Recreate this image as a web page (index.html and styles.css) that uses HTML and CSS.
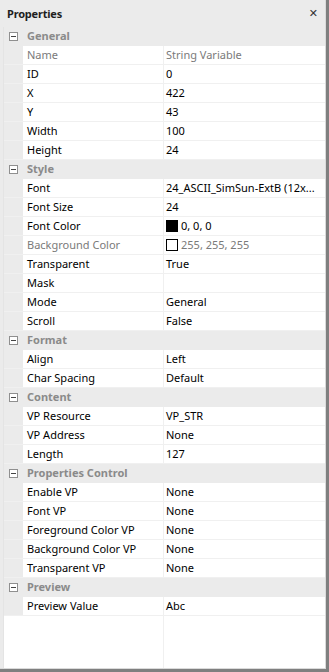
FILE: index.html
```html
<!DOCTYPE html>
<html lang="en">
<head>
    <meta charset="UTF-8">
    <title>Properties</title>
    <link rel="stylesheet" href="styles.css">
</head>
<body>
    <div class="panel">
        <div class="panel-header">
            <span class="panel-title">Properties</span>
            <span class="panel-close">&#x2715;</span>
        </div>

        <div class="grid">
            <!-- General -->
            <div class="category"><span class="toggle"></span><span>General</span></div>
            <div class="row disabled"><span class="margin"></span><span class="name">Name</span><span class="value">String Variable</span></div>
            <div class="row"><span class="margin"></span><span class="name">ID</span><span class="value">0</span></div>
            <div class="row"><span class="margin"></span><span class="name">X</span><span class="value">422</span></div>
            <div class="row"><span class="margin"></span><span class="name">Y</span><span class="value">43</span></div>
            <div class="row"><span class="margin"></span><span class="name">Width</span><span class="value">100</span></div>
            <div class="row"><span class="margin"></span><span class="name">Height</span><span class="value">24</span></div>

            <!-- Style -->
            <div class="category"><span class="toggle"></span><span>Style</span></div>
            <div class="row"><span class="margin"></span><span class="name">Font</span><span class="value">24_ASCII_SimSun-ExtB (12x...</span></div>
            <div class="row"><span class="margin"></span><span class="name">Font Size</span><span class="value">24</span></div>
            <div class="row"><span class="margin"></span><span class="name">Font Color</span><span class="value"><span class="swatch black"></span>0, 0, 0</span></div>
            <div class="row disabled"><span class="margin"></span><span class="name">Background Color</span><span class="value"><span class="swatch white"></span>255, 255, 255</span></div>
            <div class="row"><span class="margin"></span><span class="name">Transparent</span><span class="value">True</span></div>
            <div class="row"><span class="margin"></span><span class="name">Mask</span><span class="value"></span></div>
            <div class="row"><span class="margin"></span><span class="name">Mode</span><span class="value">General</span></div>
            <div class="row"><span class="margin"></span><span class="name">Scroll</span><span class="value">False</span></div>

            <!-- Format -->
            <div class="category"><span class="toggle"></span><span>Format</span></div>
            <div class="row"><span class="margin"></span><span class="name">Align</span><span class="value">Left</span></div>
            <div class="row"><span class="margin"></span><span class="name">Char Spacing</span><span class="value">Default</span></div>

            <!-- Content -->
            <div class="category"><span class="toggle"></span><span>Content</span></div>
            <div class="row"><span class="margin"></span><span class="name">VP Resource</span><span class="value">VP_STR</span></div>
            <div class="row"><span class="margin"></span><span class="name">VP Address</span><span class="value">None</span></div>
            <div class="row"><span class="margin"></span><span class="name">Length</span><span class="value">127</span></div>

            <!-- Properties Control -->
            <div class="category"><span class="toggle"></span><span>Properties Control</span></div>
            <div class="row"><span class="margin"></span><span class="name">Enable VP</span><span class="value">None</span></div>
            <div class="row"><span class="margin"></span><span class="name">Font VP</span><span class="value">None</span></div>
            <div class="row"><span class="margin"></span><span class="name">Foreground Color VP</span><span class="value">None</span></div>
            <div class="row"><span class="margin"></span><span class="name">Background Color VP</span><span class="value">None</span></div>
            <div class="row"><span class="margin"></span><span class="name">Transparent VP</span><span class="value">None</span></div>

            <!-- Preview -->
            <div class="category"><span class="toggle"></span><span>Preview</span></div>
            <div class="row"><span class="margin"></span><span class="name">Preview Value</span><span class="value">Abc</span></div>

            <div class="filler"><span class="filler-left"></span><span></span></div>
        </div>
    </div>
</body>
</html>
```

FILE: styles.css
```css
html, body {
    margin: 0;
    padding: 0;
}

body {
    font-family: "Noto Sans", "Open Sans", sans-serif;
    font-size: 11px;
    color: #000;
    background-color: #7f7f7f;
}

.panel {
    width: 326px;
    height: 669px;
    background-color: #ebebeb;
    display: flex;
    flex-direction: column;
    box-sizing: border-box;
    border-right: 1px solid #dadada;
    border-bottom: 1px solid #dadada;
}

.panel-header {
    height: 27px;
    display: flex;
    align-items: center;
    justify-content: space-between;
    padding: 0 7px 0 7px;
    flex-shrink: 0;
}

.panel-title {
    font-weight: bold;
    color: #1e1e1e;
    letter-spacing: -0.2px;
}

.panel-close {
    font-size: 11px;
    color: #333;
    font-family: "DejaVu Sans", sans-serif;
}

.grid {
    flex: 1;
    display: flex;
    flex-direction: column;
    margin-left: 3px;
    border-left: 1px solid #e4e4e4;
    background-color: #fff;
}

.category,
.row {
    height: 18px;
    line-height: 18px;
    border-bottom: 1px solid #f0f0f0;
    display: grid;
    grid-template-columns: 19px 141px 1fr;
    white-space: nowrap;
}

.category {
    background-color: #ebebeb;
    border-bottom-color: #ebebeb;
    font-weight: bold;
    color: #8a8a8a;
}

.category span:last-child {
    padding-left: 4px;
}

.toggle {
    width: 9px;
    height: 9px;
    box-sizing: border-box;
    border: 1px solid #8f8f8f;
    background-color: #fff;
    margin: 5px 0 0 5px;
    position: relative;
}

.toggle::after {
    content: "";
    position: absolute;
    left: 1px;
    top: 3px;
    width: 5px;
    height: 1px;
    background-color: #444;
}

.margin {
    background-color: #ebebeb;
}

.name {
    padding-left: 4px;
    border-right: 1px solid #f0f0f0;
    overflow: hidden;
}

.value {
    padding-left: 2px;
    display: flex;
    align-items: center;
    overflow: hidden;
}

.disabled .name,
.disabled .value {
    color: #7a7a7a;
}

.swatch {
    width: 12px;
    height: 12px;
    box-sizing: border-box;
    border: 1px solid #000;
    margin-right: 3px;
}

.swatch.black {
    background-color: #000;
}

.swatch.white {
    background-color: #fff;
}

.filler {
    flex: 1;
    display: grid;
    grid-template-columns: 160px 1fr;
}

.filler-left {
    border-right: 1px solid #f0f0f0;
}
```
